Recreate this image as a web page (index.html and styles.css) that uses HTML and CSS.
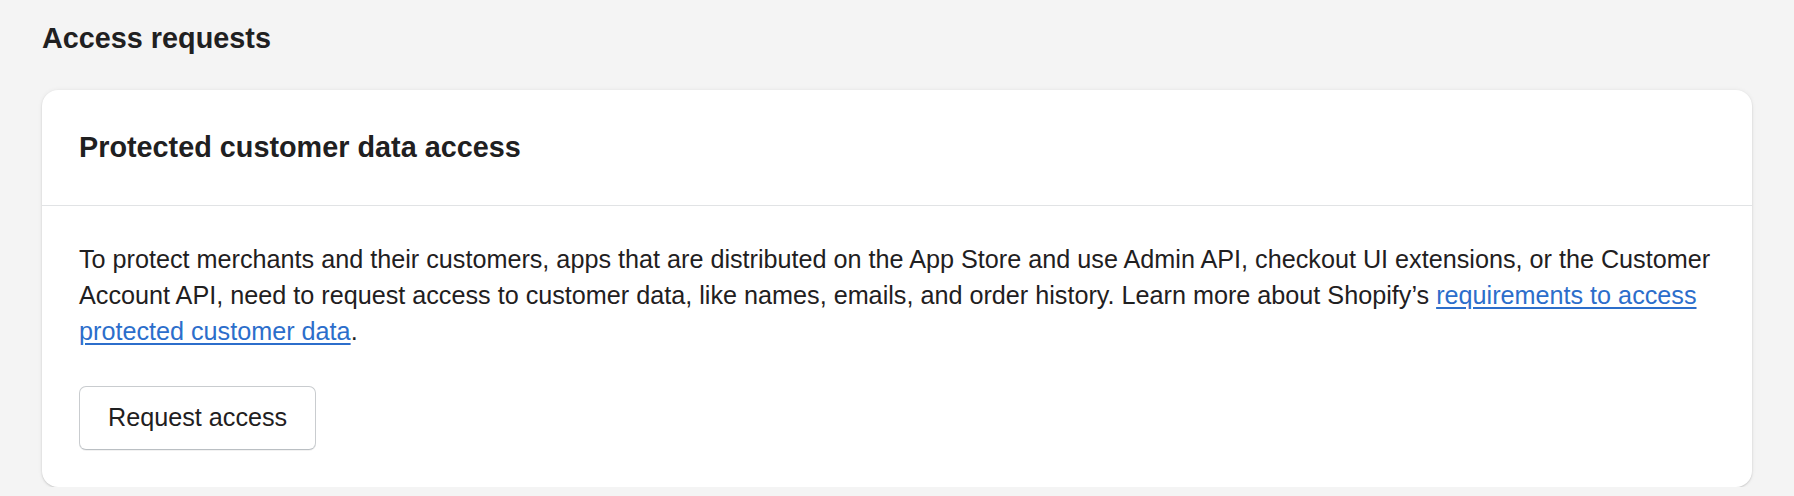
FILE: index.html
```html
<!DOCTYPE html>
<html lang="en">
<head>
<meta charset="utf-8">
<title>Access requests</title>
<link rel="stylesheet" href="styles.css">
</head>
<body>
<main class="page">
  <h1 class="page-title">Access requests</h1>
  <section class="card">
    <header class="card-header">
      <h2 class="card-title">Protected customer data access</h2>
    </header>
    <div class="card-body">
      <p class="card-text">To protect merchants and their customers, apps that are distributed on the App Store and use Admin API, checkout UI extensions, or the Customer Account API, need to request access to customer data, like names, emails, and order history. Learn more about Shopify’s <a class="link" href="#">requirements to access protected customer data</a>.</p>
      <div class="actions">
        <button class="btn" type="button">Request access</button>
      </div>
    </div>
  </section>
</main>
</body>
</html>
```
FILE: styles.css
```css
* { box-sizing: border-box; }

html, body {
  margin: 0;
  padding: 0;
  background: #f4f4f4;
}

body {
  font-family: "Liberation Sans", Arial, sans-serif;
  color: #1f2021;
  -webkit-font-smoothing: antialiased;
}

.page {
  padding: 20px 42px 0 42px;
}

.page-title {
  margin: 0 0 34px 0;
  font-size: 28.8px;
  line-height: 36px;
  font-weight: 700;
  color: #1f2021;
}

.card {
  background: #ffffff;
  border-radius: 16px;
  box-shadow: 0 0 5px rgba(23, 24, 24, 0.06), 0 1px 2px rgba(0, 0, 0, 0.15);
  overflow: hidden;
}

.card-header {
  padding: 36px 37px;
  border-bottom: 1px solid #e1e3e5;
}

.card-title {
  margin: 0;
  font-size: 28.8px;
  line-height: 43px;
  font-weight: 700;
  color: #1f2021;
}

.card-body {
  padding: 35px 35px 37px 37px;
  display: flex;
  flex-direction: column;
  gap: 37px;
}

.card-text {
  margin: 0;
  font-size: 25.2px;
  line-height: 36px;
}

.link {
  color: #2c6ecb;
  text-decoration: underline;
  text-underline-offset: 3px;
}

.actions {
  display: flex;
}

.btn {
  font-family: "Liberation Sans", Arial, sans-serif;
  font-size: 25.2px;
  line-height: 36px;
  color: #1f2021;
  background: #ffffff;
  border: 1px solid #c9cccf;
  border-bottom-color: #babfc3;
  border-radius: 7px;
  padding: 12px 28px 14px 28px;
  height: 64px;
  box-shadow: 0 1px 0 rgba(0, 0, 0, 0.05);
  cursor: pointer;
}
```
